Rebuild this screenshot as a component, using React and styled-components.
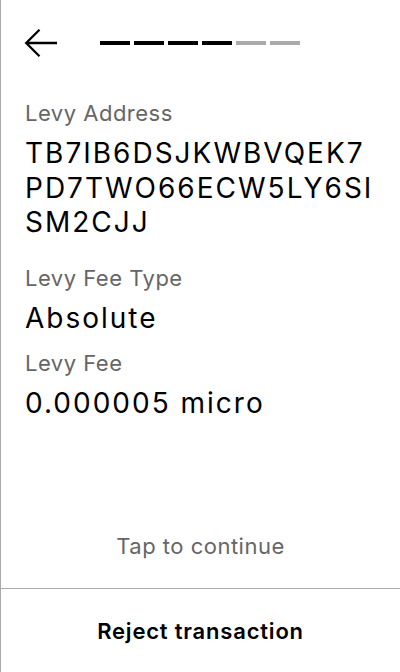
import React from "react";
import styled, { createGlobalStyle } from "styled-components";

const Global = createGlobalStyle`
  html, body { margin: 0; padding: 0; background: #fff; }
  body { font-family: Inter, "Noto Sans", sans-serif; }
`;

const Screen = styled.div`
  width: 400px;
  height: 672px;
  box-sizing: border-box;
  border-left: 1px solid #aaa;
  display: flex;
  flex-direction: column;
  color: #000;
`;

const Header = styled.div`
  display: flex;
  align-items: center;
  padding: 29px 0 0 23px;
  height: 28px;
`;

const BackButton = styled.button`
  border: 0;
  background: none;
  padding: 0;
  width: 34px;
  height: 28px;
  display: flex;
  align-items: center;
  cursor: pointer;
`;

const Progress = styled.div`
  display: flex;
  gap: 4px;
  margin-left: 42px;
  margin-top: -1px;
`;

const Step = styled.div`
  width: 30px;
  height: 4px;
  background: ${(p) => (p.$done ? "#000" : "#aaa")};
`;

const Content = styled.div`
  flex: 1;
  padding: 42px 20px 0 24px;
  display: flex;
  flex-direction: column;
`;

const Field = styled.div`
  display: flex;
  flex-direction: column;
  gap: 9px;
  margin-bottom: ${(p) => p.$space}px;
`;

const Label = styled.div`
  font-size: 22px;
  line-height: 28px;
  letter-spacing: 0.5px;
  color: #666;
`;

const Value = styled.div`
  font-size: 28px;
  line-height: 34.5px;
  letter-spacing: 2px;
  word-break: break-all;
`;

const Hint = styled.div`
  text-align: center;
  font-size: 22px;
  line-height: 28px;
  letter-spacing: 0.5px;
  color: #666;
  padding-bottom: 28px;
`;

const Footer = styled.button`
  border: 0;
  border-top: 1px solid #aaa;
  background: none;
  height: 84px;
  padding: 0;
  font-family: Inter, "Noto Sans", sans-serif;
  font-size: 22px;
  font-weight: 600;
  letter-spacing: 0.8px;
  color: #000;
  cursor: pointer;
`;

const fields = [
  { label: "Levy Address", value: "TB7IB6DSJKWBVQEK7PD7TWO66ECW5LY6SISM2CJJ", space: 24 },
  { label: "Levy Fee Type", value: "Absolute", space: 14 },
  { label: "Levy Fee", value: "0.000005 micro", space: 14 },
];

export default function App() {
  return (
    <>
      <Global />
      <Screen>
        <Header>
          <BackButton aria-label="Back">
            <svg width="34" height="28" viewBox="0 0 34 28" fill="none">
              <path d="M33 14H2M15.5 0.8L2.2 14L15.5 27.2" stroke="#000" strokeWidth="2.3" />
            </svg>
          </BackButton>
          <Progress>
            {[1, 1, 1, 1, 0, 0].map((d, i) => (
              <Step key={i} $done={!!d} />
            ))}
          </Progress>
        </Header>
        <Content>
          {fields.map((f) => (
            <Field key={f.label} $space={f.space}>
              <Label>{f.label}</Label>
              <Value>{f.value}</Value>
            </Field>
          ))}
        </Content>
        <Hint>Tap to continue</Hint>
        <Footer>Reject transaction</Footer>
      </Screen>
    </>
  );
}
